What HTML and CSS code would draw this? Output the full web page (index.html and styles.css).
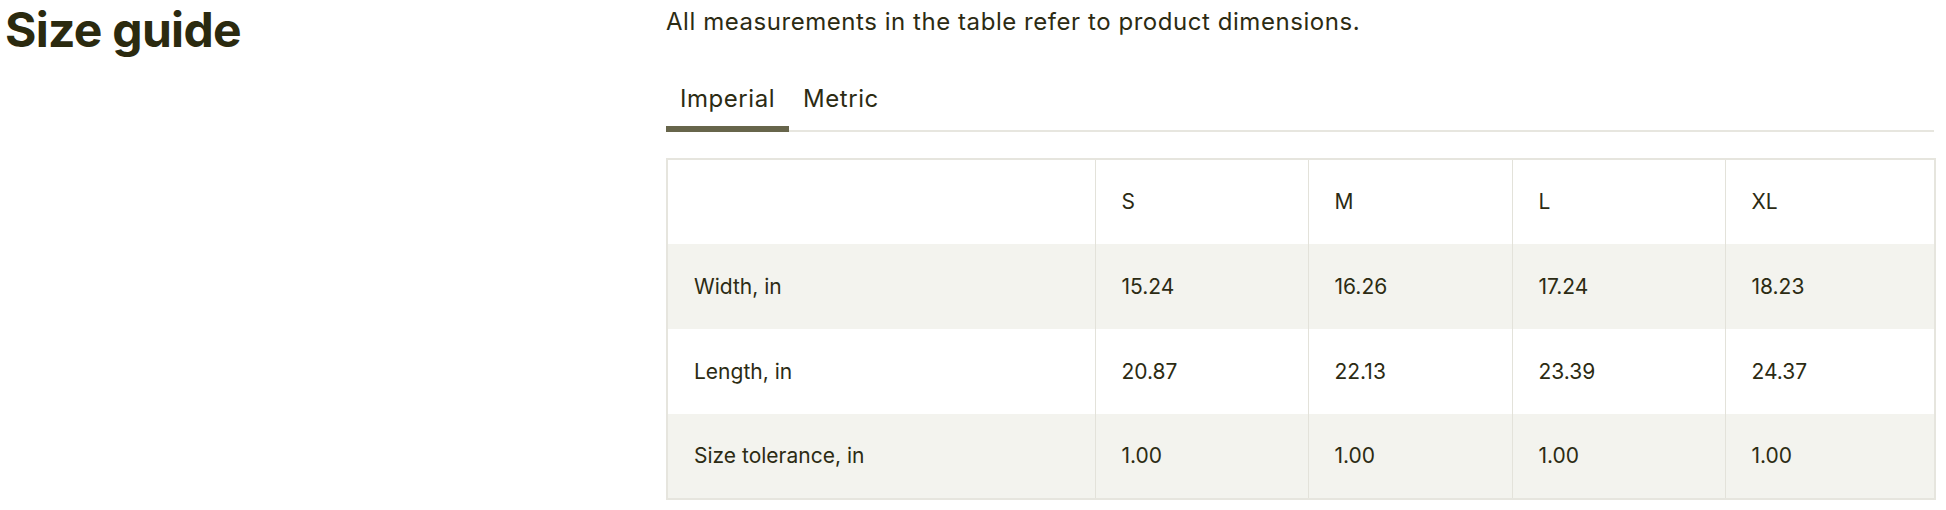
FILE: index.html
```html
<!DOCTYPE html>
<html lang="en">
<head>
<meta charset="utf-8">
<title>Size guide</title>
<link rel="stylesheet" href="styles.css">
</head>
<body>
<div class="page">
  <div class="side">
    <h2 class="title">Size guide</h2>
  </div>
  <div class="main">
    <p class="lead">All measurements in the table refer to product dimensions.</p>
    <div class="tabs">
      <button class="tab tab--active">Imperial</button>
      <button class="tab">Metric</button>
    </div>
    <table class="sizes">
      <colgroup>
        <col class="c-label">
        <col class="c-s">
        <col class="c-m">
        <col class="c-l">
        <col class="c-xl">
      </colgroup>
      <thead>
        <tr><td></td><td>S</td><td>M</td><td>L</td><td>XL</td></tr>
      </thead>
      <tbody>
        <tr class="alt"><td>Width, in</td><td>15.24</td><td>16.26</td><td>17.24</td><td>18.23</td></tr>
        <tr><td>Length, in</td><td>20.87</td><td>22.13</td><td>23.39</td><td>24.37</td></tr>
        <tr class="alt"><td>Size tolerance, in</td><td>1.00</td><td>1.00</td><td>1.00</td><td>1.00</td></tr>
      </tbody>
    </table>
  </div>
</div>
</body>
</html>
```

FILE: styles.css
```css
* { box-sizing: border-box; }

html, body {
  margin: 0;
  background: #ffffff;
}

body {
  font-family: "Inter", "Liberation Sans", sans-serif;
  color: #2c2b13;
}

.page {
  display: grid;
  grid-template-columns: 661px 1268px;
  padding: 6px 12px 0 5px;
}

.title {
  margin: 2px 0 0;
  font-size: 48px;
  line-height: 44px;
  font-weight: 700;
  letter-spacing: -0.015em;
  color: #2b2a0f;
}

.lead {
  margin: 0;
  font-size: 24px;
  line-height: 32px;
  letter-spacing: 0.55px;
}

.tabs {
  display: flex;
  margin-top: 45px;
  border-bottom: 2px solid #e7e6df;
}

.tab {
  font: inherit;
  font-size: 24px;
  line-height: 32px;
  letter-spacing: 0.55px;
  color: #2c2b13;
  background: none;
  border: 0;
  border-bottom: 6px solid transparent;
  margin: 0 0 -2px;
  padding: 0 14px 11px;
  cursor: pointer;
}

.tab--active {
  border-bottom-color: #67654b;
}

.sizes {
  margin-top: 26px;
  width: 100%;
  table-layout: fixed;
  border-collapse: collapse;
  border: 2px solid #e6e5de;
  font-size: 21px;
  line-height: 28px;
}

.c-label { width: 428px; }
.c-s { width: 213px; }
.c-m { width: 204px; }
.c-l { width: 213px; }
.c-xl { width: 210px; }

.sizes td {
  height: 85px;
  padding: 0 26px;
  vertical-align: middle;
  border-left: 1px solid #e3e2da;
}

.sizes td:first-child {
  border-left: 0;
}

.sizes .alt td {
  background: #f3f3ee;
}
```
